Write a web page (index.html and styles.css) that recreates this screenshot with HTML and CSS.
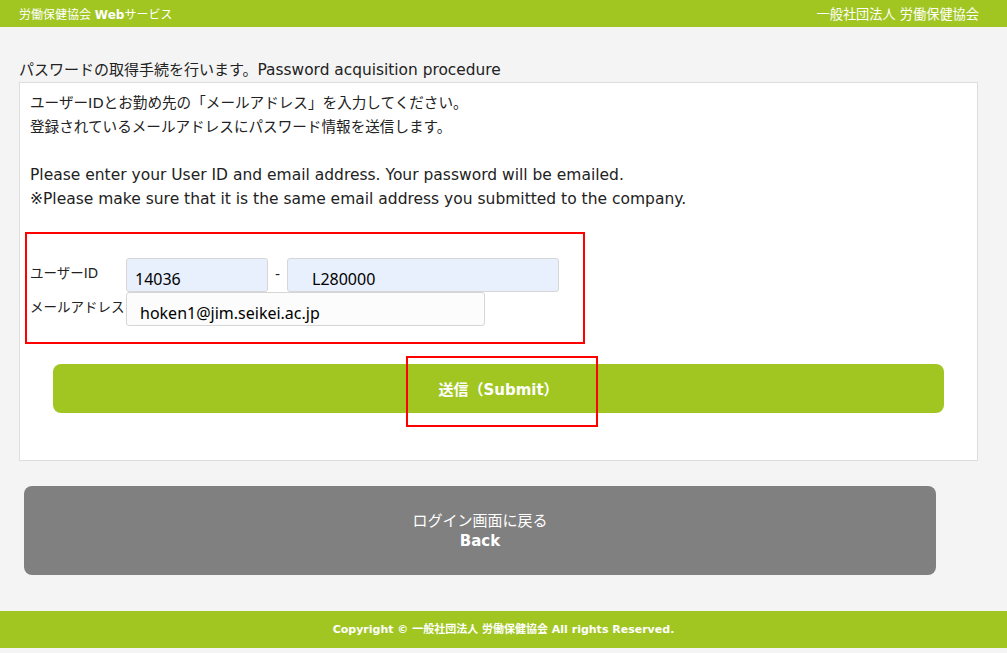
FILE: index.html
```html
<!DOCTYPE html>
<html>
  <head>
    <title>パスワードの取得手続</title>
    <link rel="stylesheet" href="styles.css">
  </head>
  <body>
    <div class="header">
      <div class="header-left">労働保健協会 <b>Web</b>サービス</div>
      <div class="header-right">一般社団法人 労働保健協会</div>
    </div>

    <div class="container">
      <h2 class="page-title">パスワードの取得手続を行います。<span class="title-en">Password acquisition procedure</span></h2>

      <div class="panel">
        <p class="lead">
          ユーザーIDとお勤め先の「メールアドレス」を入力してください。<br>
          登録されているメールアドレスにパスワード情報を送信します。<br>
          <br>
          <span class="lead-en">Please enter your User ID and email address. Your password will be emailed.</span><br>
          <span class="lead-en">※Please make sure that it is the same email address you submitted to the company.</span>
        </p>

        <div class="form-box">
          <div class="form-row">
            <label class="form-label" for="uid1">ユーザーID</label>
            <input class="input input-id autofill" type="text" id="uid1" value="14036" />
            <span class="dash">-</span>
            <input class="input input-id2 autofill" type="text" id="uid2" value="L280000" />
          </div>
          <div class="form-row">
            <label class="form-label" for="mail">メールアドレス</label>
            <input class="input input-mail" type="email" id="mail" value="hoken1@jim.seikei.ac.jp" />
          </div>
        </div>

        <div class="submit-wrap">
          <button class="button button-submit">送信（Submit）</button>
          <div class="mark"></div>
        </div>
      </div>

      <button class="button button-back">ログイン画面に戻る<br><b>Back</b></button>
    </div>

    <div class="footer">Copyright © 一般社団法人 労働保健協会 All rights Reserved.</div>
  </body>
</html>
```

FILE: styles.css
```css
body {
  margin: 0;
  background-color: #f4f4f4;
  color: #222;
  font-family: "DejaVu Sans", "Noto Sans CJK JP", sans-serif;
}

.header {
  display: flex;
  justify-content: space-between;
  align-items: center;
  height: 27px;
  padding: 0 28px 0 19px;
  background-color: #a1c621;
  color: #fff;
  font-size: 12px;
}

.header-right {
  font-size: 13.2px;
}

.container {
  padding: 34px 29px 36px 19px;
}

.page-title {
  margin: 0;
  height: 21px;
  font-size: 15px;
  font-weight: normal;
  line-height: 19px;
}

.title-en {
  font-size: 15.4px;
}

.panel {
  padding: 8px 10px 47px 10px;
  background-color: #fff;
  border: 1px solid #ddd;
}

.lead {
  margin: 0;
  font-size: 14.6px;
  line-height: 24px;
}

.lead-en {
  font-size: 15.5px;
}

.form-box {
  margin: 21px 0 0 -5px;
  width: 553px;
  padding: 24px 0 16px 3px;
  border: 2px solid #f00;
}

.form-row {
  display: flex;
  align-items: center;
}

.form-label {
  flex-shrink: 0;
  width: 96px;
  margin-top: -6px;
  white-space: nowrap;
  font-size: 13.5px;
}

.input {
  box-sizing: border-box;
  flex-shrink: 0;
  height: 34px;
  margin: 0;
  border: 1px solid #d6d6d6;
  border-radius: 3px;
  font-family: "Noto Sans", sans-serif;
  font-size: 16px;
  color: #000;
  padding: 8px 0 0 8px;
}

.autofill {
  background-color: #e8f0fe;
}

.input-id {
  width: 142px;
}

.dash {
  width: 19px;
  text-align: center;
  font-size: 14px;
  margin-top: -2px;
}

.input-id2 {
  width: 272px;
  padding-left: 24px;
}

.input-mail {
  width: 359px;
  padding-left: 13px;
  background-color: #fcfcfc;
}

.submit-wrap {
  position: relative;
  margin: 20px 23px 0 23px;
}

.button {
  display: block;
  width: 100%;
  border: none;
  color: #fff;
  cursor: pointer;
  font-family: "DejaVu Sans", "Noto Sans CJK JP", sans-serif;
}

.button-submit {
  height: 49px;
  background-color: #a1c621;
  border-radius: 8px;
  font-size: 15px;
  font-weight: bold;
}

.mark {
  position: absolute;
  left: 353px;
  top: -8px;
  width: 188px;
  height: 67px;
  border: 2px solid #f00;
}

.button-back {
  margin: 25px 0 0 5px;
  width: 912px;
  height: 89px;
  background-color: #808080;
  border-radius: 8px;
  font-size: 15px;
  line-height: 20px;
}

.footer {
  height: 37px;
  margin-bottom: 6px;
  line-height: 37px;
  text-align: center;
  background-color: #a1c621;
  color: #fff;
  font-size: 11px;
  font-weight: bold;
}
```
